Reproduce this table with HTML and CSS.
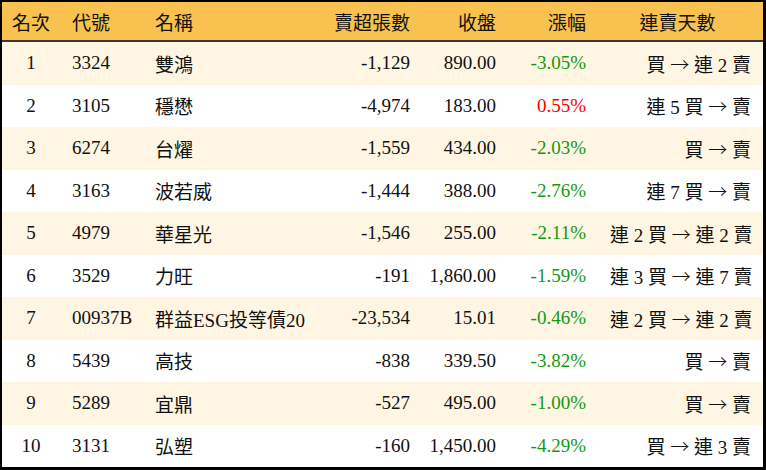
FILE: index.html
```html
<!DOCTYPE html>
<html lang="zh-Hant">
<head>
<meta charset="utf-8">
<link rel="stylesheet" href="styles.css">
</head>
<body>
<div class="frame">
<table class="rank-table">
<colgroup>
<col class="c-rank"><col class="c-code"><col class="c-name"><col class="c-vol"><col class="c-close"><col class="c-chg"><col class="c-days">
</colgroup>
<thead>
<tr>
<th class="center">名次</th>
<th class="left">代號</th>
<th class="left">名稱</th>
<th class="right">賣超張數</th>
<th class="right">收盤</th>
<th class="right">漲幅</th>
<th class="center days-h">連賣天數</th>
</tr>
</thead>
<tbody>
<tr><td class="center">1</td><td class="left">3324</td><td class="left">雙鴻</td><td class="right">-1,129</td><td class="right">890.00</td><td class="right down">-3.05%</td><td class="right">買 <span class="arr">→</span> 連 2 賣</td></tr>
<tr><td class="center">2</td><td class="left">3105</td><td class="left">穩懋</td><td class="right">-4,974</td><td class="right">183.00</td><td class="right up">0.55%</td><td class="right">連 5 買 <span class="arr">→</span> 賣</td></tr>
<tr><td class="center">3</td><td class="left">6274</td><td class="left">台燿</td><td class="right">-1,559</td><td class="right">434.00</td><td class="right down">-2.03%</td><td class="right">買 <span class="arr">→</span> 賣</td></tr>
<tr><td class="center">4</td><td class="left">3163</td><td class="left">波若威</td><td class="right">-1,444</td><td class="right">388.00</td><td class="right down">-2.76%</td><td class="right">連 7 買 <span class="arr">→</span> 賣</td></tr>
<tr><td class="center">5</td><td class="left">4979</td><td class="left">華星光</td><td class="right">-1,546</td><td class="right">255.00</td><td class="right down">-2.11%</td><td class="right">連 2 買 <span class="arr">→</span> 連 2 賣</td></tr>
<tr><td class="center">6</td><td class="left">3529</td><td class="left">力旺</td><td class="right">-191</td><td class="right">1,860.00</td><td class="right down">-1.59%</td><td class="right">連 3 買 <span class="arr">→</span> 連 7 賣</td></tr>
<tr><td class="center">7</td><td class="left">00937B</td><td class="left">群益ESG投等債20</td><td class="right">-23,534</td><td class="right">15.01</td><td class="right down">-0.46%</td><td class="right">連 2 買 <span class="arr">→</span> 連 2 賣</td></tr>
<tr><td class="center">8</td><td class="left">5439</td><td class="left">高技</td><td class="right">-838</td><td class="right">339.50</td><td class="right down">-3.82%</td><td class="right">買 <span class="arr">→</span> 賣</td></tr>
<tr><td class="center">9</td><td class="left">5289</td><td class="left">宜鼎</td><td class="right">-527</td><td class="right">495.00</td><td class="right down">-1.00%</td><td class="right">買 <span class="arr">→</span> 賣</td></tr>
<tr><td class="center">10</td><td class="left">3131</td><td class="left">弘塑</td><td class="right">-160</td><td class="right">1,450.00</td><td class="right down">-4.29%</td><td class="right">買 <span class="arr">→</span> 連 3 賣</td></tr>
</tbody>
</table>
</div>
</body>
</html>
```
FILE: styles.css
```css
html, body {
  margin: 0;
  padding: 0;
  background: #ffffff;
}
.frame {
  box-sizing: border-box;
  width: 766px;
  height: 470px;
  border-style: solid;
  border-color: #000000;
  border-width: 2px 3px 3px 2px;
  overflow: hidden;
}
.rank-table {
  width: 761px;
  table-layout: fixed;
  border-collapse: separate;
  border-spacing: 0;
  font-family: "Liberation Serif", "Noto Sans CJK TC", serif;
  font-size: 19px;
  color: #111111;
}
.c-rank { width: 58px; }
.c-code { width: 83px; }
.c-name { width: 167px; }
.c-vol { width: 112px; }
.c-close { width: 86px; }
.c-chg { width: 90px; }
.c-days { width: 165px; }
.rank-table th {
  height: 38px;
  padding: 0 12px;
  background: #f9c14f;
  border-bottom: 2px solid #3a3a3a;
  font-weight: 400;
  white-space: nowrap;
}
.rank-table td {
  height: 42.5px;
  padding: 0 12px;
  white-space: nowrap;
}
.rank-table th:first-child,
.rank-table td:first-child {
  padding: 0;
}
.rank-table th:nth-child(5),
.rank-table td:nth-child(5) {
  padding-left: 0;
}
.rank-table th.days-h {
  padding: 0 6px 0 0;
}
.rank-table tbody tr:nth-child(odd) td {
  background: #fef5e2;
}
.rank-table tbody tr:nth-child(even) td {
  background: #ffffff;
}
.arr {
  font-family: "Noto Sans CJK TC", sans-serif;
  font-weight: 300;
}
.left { text-align: left; }
.right { text-align: right; }
.center { text-align: center; }
.down { color: #119a11; }
.up { color: #f50000; }
```
